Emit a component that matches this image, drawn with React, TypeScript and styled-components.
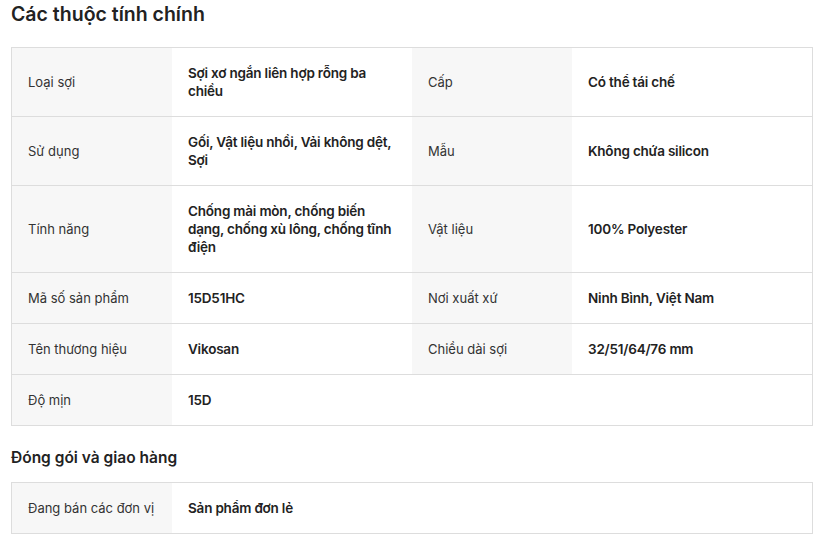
import React from "react";
import styled, { createGlobalStyle } from "styled-components";

const Global = createGlobalStyle`
  html, body { margin: 0; padding: 0; background: #ffffff; }
  body { font-family: Inter, "Noto Sans", "Liberation Sans", sans-serif; color: #222222; }
`;

const Page = styled.div`
  padding: 0 9px 0 11px;
  width: 802px;
`;

const Title = styled.h2`
  margin: 0;
  font-size: 19.5px;
  line-height: 28px;
  font-weight: 600;
  color: #222222;
  height: 47px;
  box-sizing: border-box;
`;

const SubTitle = styled.h3`
  margin: 0;
  padding-top: 20px;
  font-size: 15.5px;
  line-height: 24px;
  font-weight: 600;
  color: #222222;
  height: 56px;
  box-sizing: border-box;
`;

const Table = styled.div`
  border: 1px solid #dddddd;
  border-bottom: none;
  width: 800px;
`;

const Row = styled.div`
  display: grid;
  grid-template-columns: 160px 240px 160px 240px;
  border-bottom: 1px solid #dddddd;
`;

const Label = styled.div`
  background: #f7f7f7;
  color: #333333;
  padding: 16px 12px 16px 16px;
  font-size: 13px;
  line-height: 18px;
  font-weight: 400;
  display: flex;
  align-items: center;
`;

const Value = styled.div`
  background: #ffffff;
  color: #222222;
  padding: 16px;
  font-size: 13.5px;
  line-height: 18px;
  font-weight: 600;
  letter-spacing: -0.2px;
  display: flex;
  align-items: center;
`;

type Pair = [string, string];

const rows: Pair[][] = [
  [["Loại sợi", "Sợi xơ ngắn liên hợp rỗng ba chiều"], ["Cấp", "Có thể tái chế"]],
  [["Sử dụng", "Gối, Vật liệu nhồi, Vải không dệt, Sợi"], ["Mẫu", "Không chứa silicon"]],
  [["Tính năng", "Chống mài mòn, chống biến dạng, chống xù lông, chống tĩnh điện"], ["Vật liệu", "100% Polyester"]],
  [["Mã số sản phẩm", "15D51HC"], ["Nơi xuất xứ", "Ninh Bình, Việt Nam"]],
  [["Tên thương hiệu", "Vikosan"], ["Chiều dài sợi", "32/51/64/76 mm"]],
  [["Độ mịn", "15D"]],
];

export default function App() {
  return (
    <Page>
      <Global />
      <Title>Các thuộc tính chính</Title>
      <Table>
        {rows.map((r, i) => (
          <Row key={i}>
            {r.map(([l, v]) => (
              <React.Fragment key={l}>
                <Label>{l}</Label>
                <Value>{v}</Value>
              </React.Fragment>
            ))}
          </Row>
        ))}
      </Table>
      <SubTitle>Đóng gói và giao hàng</SubTitle>
      <Table>
        <Row>
          <Label>Đang bán các đơn vị</Label>
          <Value>Sản phẩm đơn lẻ</Value>
        </Row>
      </Table>
    </Page>
  );
}
